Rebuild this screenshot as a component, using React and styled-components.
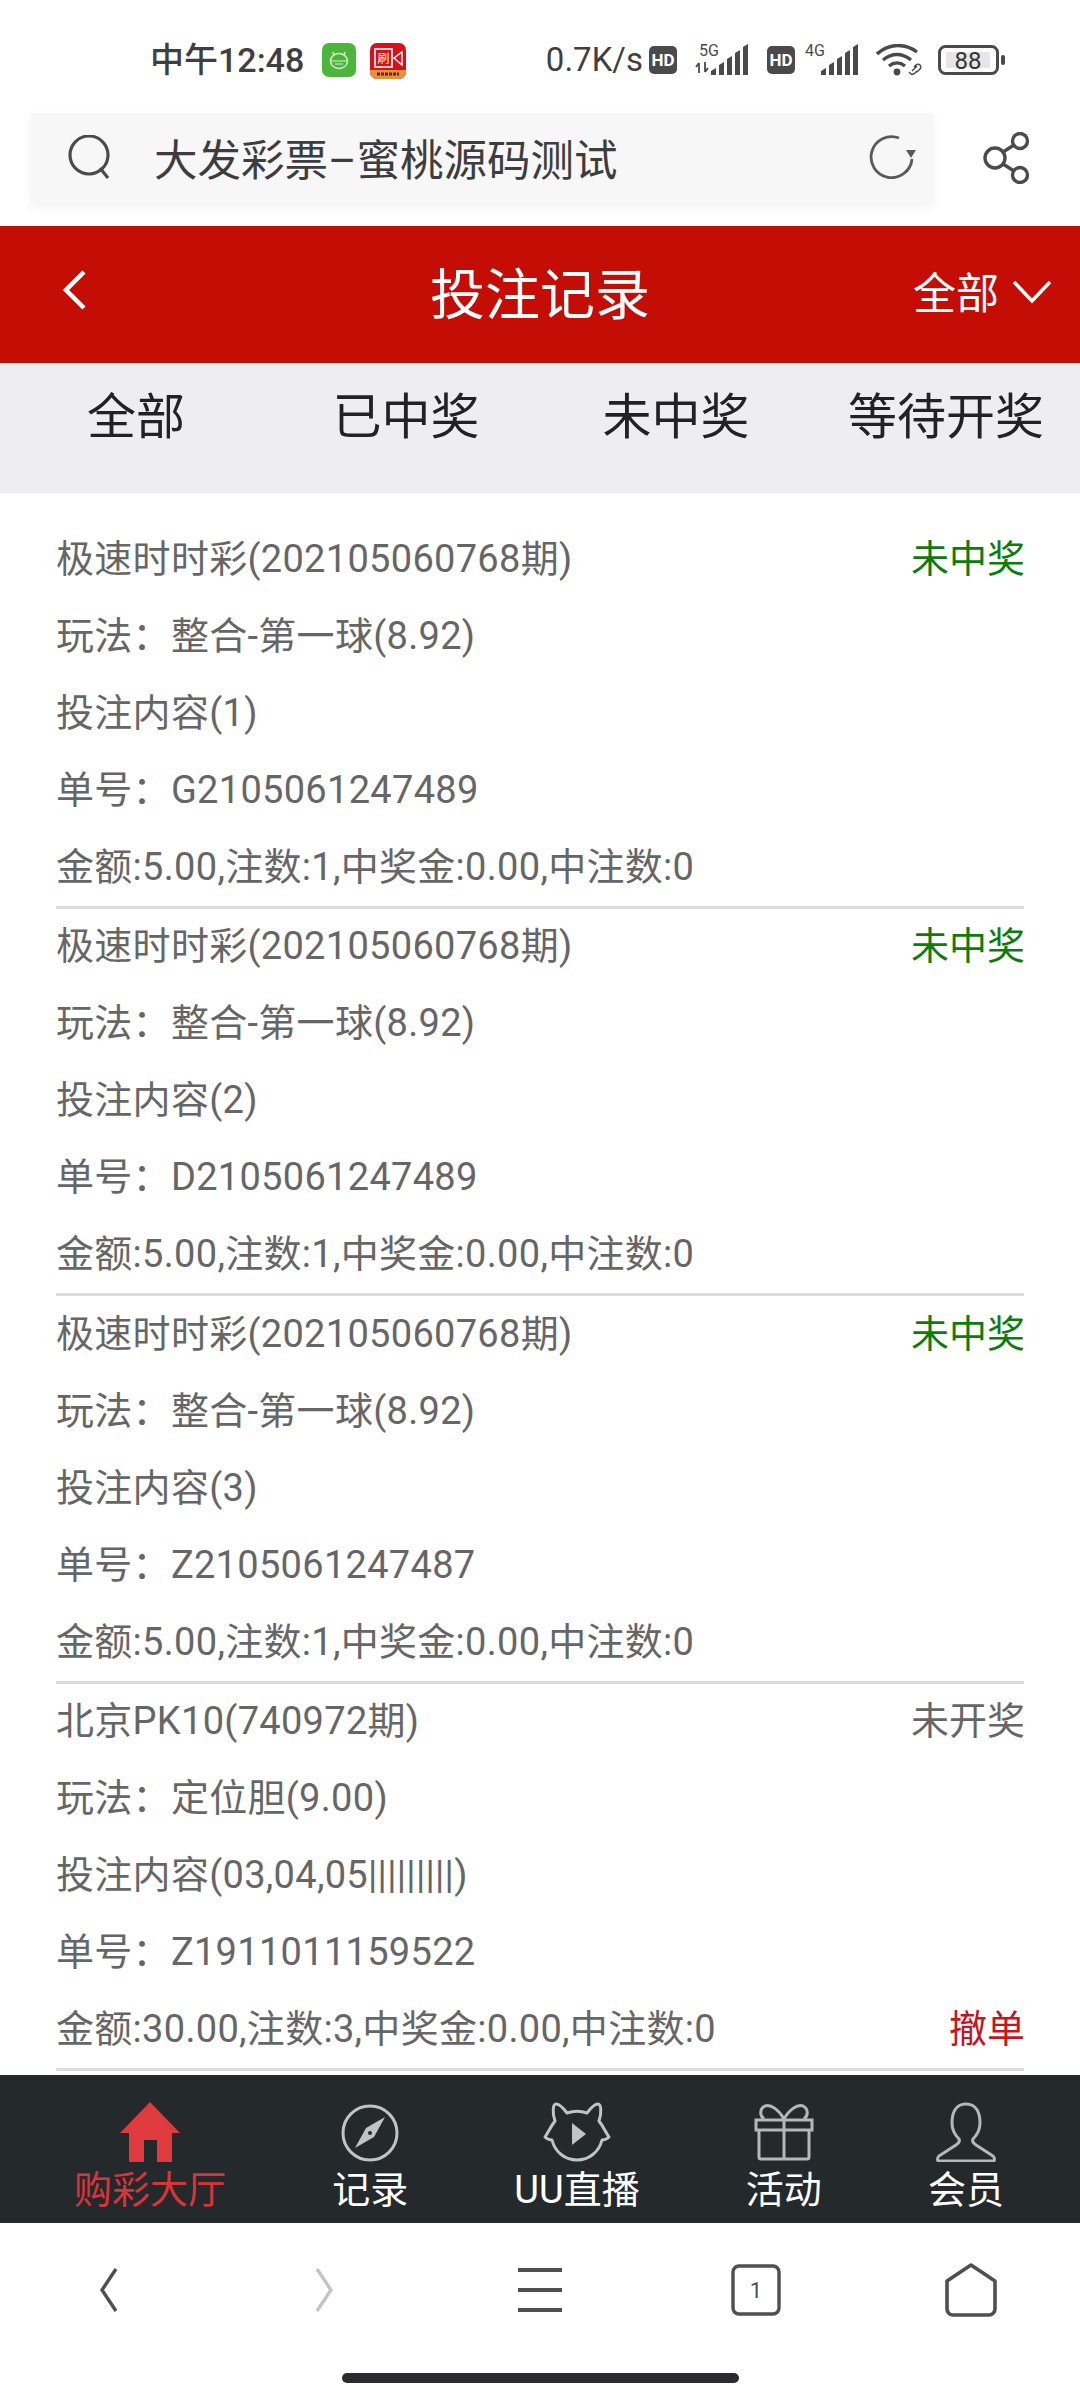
import React from 'react';
import styled, { createGlobalStyle } from 'styled-components';

const GlobalStyle = createGlobalStyle`
  html, body {
    margin: 0;
    padding: 0;
    background: #fff;
  }
  body {
    font-family: Roboto, "Noto Sans CJK SC", sans-serif;
  }
  * { box-sizing: border-box; }
`;

const Page = styled.div`
  width: 1080px;
  height: 2400px;
  display: flex;
  flex-direction: column;
  overflow: hidden;
  background: #fff;
`;

/* system status bar */
const StatusBar = styled.div`
  height: 113px;
  padding: 43px 74px 0 150px;
  display: flex;
  align-items: flex-start;
  color: #3f3f41;
`;
const Clock = styled.span`
  font-size: 34px;
  line-height: 34px;
  font-weight: 500;
  width: 172px;
`;
const AppBadges = styled.div`
  display: flex;
  gap: 14px;
`;
const Speed = styled.span`
  margin-left: auto;
  font-size: 33px;
  line-height: 34px;
  margin-right: 6px;
`;
const StatusIcons = styled.div`
  display: flex;
  align-items: center;
  height: 34px;
`;

/* browser address bar */
const AddressRow = styled.div`
  height: 113px;
  padding: 0 49px 23px 31px;
  display: flex;
  align-items: stretch;
  justify-content: space-between;
`;
const SearchBox = styled.div`
  width: 902px;
  display: flex;
  align-items: center;
  padding: 0 16px 2px 36px;
  background: #f7f7f7;
  box-shadow: 0 4px 10px rgba(0, 0, 0, 0.05);
`;
const SearchText = styled.span`
  margin-left: 41px;
  font-size: 43.5px;
  color: #3d3d3d;
  flex: 1;
`;
const ShareButton = styled.div`
  display: flex;
  align-items: center;
`;

/* red page header */
const Header = styled.div`
  height: 137px;
  background: #c30d05;
  color: #fff;
  display: grid;
  grid-template-columns: 1fr auto 1fr;
  align-items: center;
  padding: 0 28px 9px;
`;
const BackLink = styled.div`
  display: flex;
  margin-left: 34px;
`;
const HeaderTitle = styled.div`
  font-size: 55px;
`;
const HeaderFilter = styled.div`
  display: flex;
  align-items: center;
  justify-content: flex-end;
  gap: 13px;
  font-size: 43px;

  svg {
    margin-top: 4px;
  }
`;

/* tabs */
const Tabs = styled.div`
  height: 130px;
  background: #eeeef0;
  display: grid;
  grid-template-columns: repeat(4, 270px);
  padding: 0 0 0 1px;
`;
const Tab = styled.div`
  font-size: 49px;
  color: #222;
  text-align: center;
  line-height: 109px;
  white-space: nowrap;
`;

/* record list */
const List = styled.div`
  flex: 1;
  padding: 28px 56px 0;
  overflow: hidden;
`;
const Record = styled.div`
  height: 387.5px;
  border-bottom: 3px solid #dcdcdc;
`;
const Line = styled.div`
  height: 77.1px;
  padding-bottom: 9px;
  display: flex;
  align-items: center;
  justify-content: space-between;
  font-size: 38px;
  letter-spacing: 0.3px;
  color: #666;
  white-space: nowrap;
`;
const Status = styled.span`
  color: ${p => p.$color};
  letter-spacing: 0;
  margin-right: -1px;
`;

/* app tab bar */
const TabBar = styled.div`
  height: 148px;
  background: #24292c;
  display: flex;
  justify-content: space-between;
  padding: 0 76px 0 74px;
`;
const TabItem = styled.div`
  display: flex;
  flex-direction: column;
  align-items: center;
  color: ${p => (p.$active ? '#d8343a' : '#fff')};
  font-size: 38px;
  line-height: 44px;
  padding-top: 3px;
  white-space: nowrap;
`;
const TabIcon = styled.div`
  height: 90px;
  display: flex;
  align-items: flex-end;
  padding-bottom: 6px;
`;

/* browser bottom toolbar */
const BrowserBar = styled.div`
  height: 150px;
  display: grid;
  grid-template-columns: repeat(5, 1fr);
  grid-template-rows: 53px;
  padding: 40px 1px 0;
  align-items: center;
  justify-items: center;
`;
const HomeIndicator = styled.div`
  width: 397px;
  height: 10px;
  border-radius: 5px;
  background: #2b2b2d;
  margin: 0 auto 17px;
`;

const records = [
  { title: '极速时时彩(202105060768期)', status: '未中奖', color: '#0b7d0b', play: '玩法：整合-第一球(8.92)', content: '投注内容(1)', no: '单号：G2105061247489', amount: '金额:5.00,注数:1,中奖金:0.00,中注数:0' },
  { title: '极速时时彩(202105060768期)', status: '未中奖', color: '#0b7d0b', play: '玩法：整合-第一球(8.92)', content: '投注内容(2)', no: '单号：D2105061247489', amount: '金额:5.00,注数:1,中奖金:0.00,中注数:0' },
  { title: '极速时时彩(202105060768期)', status: '未中奖', color: '#0b7d0b', play: '玩法：整合-第一球(8.92)', content: '投注内容(3)', no: '单号：Z2105061247487', amount: '金额:5.00,注数:1,中奖金:0.00,中注数:0' },
  { title: '北京PK10(740972期)', status: '未开奖', color: '#666', play: '玩法：定位胆(9.00)', content: '投注内容(03,04,05|||||||||)', no: '单号：Z1911011159522', amount: '金额:30.00,注数:3,中奖金:0.00,中注数:0', cancel: true },
];

const HdBadge = ({ ml }) => (
  <svg width="28" height="28" viewBox="0 0 28 28" style={{ marginLeft: ml }}>
    <rect width="28" height="28" rx="5" fill="#4a4a4c" />
    <text x="14" y="20" textAnchor="middle" fontFamily="Roboto, sans-serif" fontWeight="700" fontSize="17" fill="#fff">HD</text>
  </svg>
);

const Signal = ({ label, arrows, ml }) => (
  <svg width="56" height="38" viewBox="0 -6 56 38" style={{ marginLeft: ml, marginTop: -6 }}>
    <text x={arrows ? 4 : 0} y="12" fontFamily="Roboto, sans-serif" fontSize="16" fill="#4a4a4c">{label}</text>
    {arrows && <path d="M4 29V19M4 19L1 23M10 18V28M10 28L13 24" stroke="#4a4a4c" strokeWidth="1.8" fill="none" />}
    <path d="M16 31v-4l5-3v7zM24 31V21l5-3v13zM32 31V15l5-3v19zM40 31V9l5-3v25zM48 31V3l5-3v31z" fill="#4a4a4c" />
  </svg>
);

const Wifi = () => (
  <svg width="48" height="32" viewBox="0 0 48 32" style={{ marginLeft: 15 }}>
    <path d="M1 10C13-1 29-1 41 8M7 16c9-7 19-7 28 0M13 22c5-4 11-4 16 0" stroke="#4a4a4c" strokeWidth="3.4" fill="none" />
    <circle cx="21" cy="28" r="3.4" fill="#4a4a4c" />
    <path d="M33 28l2 2c2 1 3 0 4-1l2-2M38 23l2-2c1-1 3-1 4 0s1 3 0 4l-3 3M36 27l5-5" stroke="#4a4a4c" strokeWidth="1.5" fill="none" />
  </svg>
);

const Battery = () => (
  <svg width="68" height="30" viewBox="0 0 68 30" style={{ marginLeft: 14 }}>
    <rect x="1.5" y="1.5" width="58" height="27" rx="6" fill="none" stroke="#4a4a4c" strokeWidth="3" />
    <rect x="8" y="7" width="44" height="16" fill="#e6e6e6" />
    <rect x="63" y="10" width="4" height="10" rx="2" fill="#4a4a4c" />
    <text x="30" y="23.5" textAnchor="middle" fontFamily="Roboto, sans-serif" fontSize="24" fill="#333">88</text>
  </svg>
);

const GreenBadge = () => (
  <svg width="34" height="34" viewBox="0 0 34 34">
    <rect width="34" height="34" rx="7" fill="#4cb53c" />
    <path d="M11 9l1 4M23 9l-1 4" stroke="#d8f0d2" strokeWidth="1.5" />
    <ellipse cx="17" cy="18" rx="8.5" ry="7.5" fill="none" stroke="#d8f0d2" strokeWidth="1.5" />
    <path d="M9 18h16M13 21h8" stroke="#d8f0d2" strokeWidth="1.2" />
  </svg>
);

const RedBadge = () => (
  <svg width="36" height="36" viewBox="0 0 36 36">
    <rect width="36" height="36" rx="7" fill="#d8101a" />
    <path d="M0 27h36v2a7 7 0 0 1-7 7H7a7 7 0 0 1-7-7z" fill="#e8913a" />
    <rect x="5" y="6" width="17" height="18" fill="none" stroke="#fff" strokeWidth="1.6" />
    <path d="M24 15l8-6v13z" fill="none" stroke="#fff" strokeWidth="1.4" />
    <text x="13.5" y="20" textAnchor="middle" fontFamily="Noto Sans CJK SC, sans-serif" fontSize="12" fill="#fff">刷</text>
    <path d="M7 31h22" stroke="#5a2a10" strokeWidth="3" strokeDasharray="3 1" />
  </svg>
);

const SearchIcon = () => (
  <svg width="46" height="44" viewBox="0 0 46 44">
    <circle cx="22" cy="20" r="19" fill="none" stroke="#4b4b4b" strokeWidth="3.2" />
    <path d="M33 33l8 10" stroke="#4b4b4b" strokeWidth="3.2" />
  </svg>
);

const RefreshIcon = () => (
  <svg width="48" height="44" viewBox="0 0 48 44">
    <path d="M43 24A20.5 20.5 0 1 1 30 3" fill="none" stroke="#5a5a5a" strokeWidth="2.8" />
    <path d="M37 15h10l-5 8z" fill="#5a5a5a" />
  </svg>
);

const ShareIcon = () => (
  <svg width="48" height="52" viewBox="0 0 48 52">
    <circle cx="12" cy="26" r="10" fill="none" stroke="#4b4b4b" strokeWidth="3.4" />
    <circle cx="37" cy="9" r="7.5" fill="none" stroke="#4b4b4b" strokeWidth="3.4" />
    <circle cx="37" cy="43" r="7.5" fill="none" stroke="#4b4b4b" strokeWidth="3.4" />
    <path d="M20 20l11-7M20 32l11 7" stroke="#4b4b4b" strokeWidth="3.4" />
  </svg>
);

const HomeIcon = () => (
  <svg width="60" height="60" viewBox="0 0 60 60">
    <path d="M30 0L60 31H52V60H37V38H24V60H9V31H0z" fill="#df3b3f" />
  </svg>
);

const CompassIcon = () => (
  <svg width="58" height="58" viewBox="0 0 58 58">
    <circle cx="29" cy="29" r="27" fill="none" stroke="#c0c4c6" strokeWidth="3" />
    <path d="M44 13L33 33 14 44l11-20z" fill="#c0c4c6" />
    <circle cx="29" cy="29" r="2" fill="#24292c" />
  </svg>
);

const CatIcon = () => (
  <svg width="70" height="60" viewBox="0 0 70 60">
    <path d="M13 19C10 10 11 2 14 2c4 0 8 5 11 9 6-2 14-2 20 0 3-4 7-9 11-9 3 0 4 8 1 17 4 5 6 10 10 16-3 3-5 3-7 3-3 12-13 20-25 20S13 50 10 38c-2 0-4 0-7-3 4-6 6-11 10-16z" fill="none" stroke="#c0c4c6" strokeWidth="3" strokeLinejoin="round" />
    <path d="M30 21l14 11-14 11z" fill="#c0c4c6" />
  </svg>
);

const GiftIcon = () => (
  <svg width="60" height="58" viewBox="0 0 60 58">
    <path d="M30 15C25 6 17 0 11 2 5 5 6 12 10 15M30 15C35 6 43 0 49 2c6 3 5 10 1 13" fill="none" stroke="#b4b8ba" strokeWidth="3" />
    <path d="M2 16h56v10H2zM5 26h50M5 26v27a2 2 0 0 0 2 2h46a2 2 0 0 0 2-2V26M30 15v40" fill="none" stroke="#b4b8ba" strokeWidth="3" />
  </svg>
);

const PersonIcon = () => (
  <svg width="62" height="60" viewBox="0 0 62 60">
    <path d="M31 2C20 2 17 12 17 21c0 7 3 12 7 16 1 2 0 4-3 6L4 54c-2 2-2 5 0 5h54c2 0 2-3 0-5L41 43c-3-2-4-4-3-6 4-4 7-9 7-16 0-9-3-19-14-19z" fill="none" stroke="#b4b8ba" strokeWidth="3" strokeLinejoin="round" />
  </svg>
);

const NavBack = ({ color, flip }) => (
  <svg width="20" height="44" viewBox="0 0 20 44" style={flip ? { transform: 'scaleX(-1)' } : undefined}>
    <path d="M17 1L3 22l14 21" fill="none" stroke={color} strokeWidth="3.4" />
  </svg>
);

const MenuIcon = () => (
  <svg width="44" height="44" viewBox="0 0 44 44">
    <path d="M0 2h44M0 22h44M0 42h44" stroke="#4f4f4f" strokeWidth="4" />
  </svg>
);

const TabCount = () => (
  <svg width="50" height="52" viewBox="0 0 50 52">
    <rect x="2" y="2" width="46" height="48" rx="6" fill="none" stroke="#4f4f4f" strokeWidth="3.4" />
    <text x="25" y="34" textAnchor="middle" fontFamily="Roboto, sans-serif" fontSize="22" fill="#4f4f4f">1</text>
  </svg>
);

const BrowserHome = () => (
  <svg width="52" height="54" viewBox="0 0 52 54">
    <path d="M26 2L50 18V46a6 6 0 0 1-6 6H8a6 6 0 0 1-6-6V18z" fill="none" stroke="#4f4f4f" strokeWidth="3.6" strokeLinejoin="round" />
  </svg>
);

const App = () => (
  <Page>
    <GlobalStyle />
    <StatusBar>
      <Clock>中午12:48</Clock>
      <AppBadges>
        <GreenBadge />
        <RedBadge />
      </AppBadges>
      <Speed>0.7K/s</Speed>
      <StatusIcons>
        <HdBadge ml={0} />
        <Signal label="5G" arrows ml={18} />
        <HdBadge ml={16} />
        <Signal label="4G" ml={10} />
        <Wifi />
        <Battery />
      </StatusIcons>
    </StatusBar>

    <AddressRow>
      <SearchBox>
        <SearchIcon />
        <SearchText>大发彩票–蜜桃源码测试</SearchText>
        <RefreshIcon />
      </SearchBox>
      <ShareButton>
        <ShareIcon />
      </ShareButton>
    </AddressRow>

    <Header>
      <BackLink>
        <svg width="24" height="40" viewBox="0 0 24 40">
          <path d="M22 2L4 20l18 18" fill="none" stroke="#fff" strokeWidth="4.5" />
        </svg>
      </BackLink>
      <HeaderTitle>投注记录</HeaderTitle>
      <HeaderFilter>
        全部
        <svg width="40" height="24" viewBox="0 0 40 24">
          <path d="M2 2l18 19L38 2" fill="none" stroke="#fff" strokeWidth="3.5" />
        </svg>
      </HeaderFilter>
    </Header>

    <Tabs>
      {['全部', '已中奖', '未中奖', '等待开奖'].map(t => (
        <Tab key={t}>{t}</Tab>
      ))}
    </Tabs>

    <List>
      {records.map((r, i) => (
        <Record key={i}>
          <Line>
            {r.title}
            <Status $color={r.color}>{r.status}</Status>
          </Line>
          <Line>{r.play}</Line>
          <Line>{r.content}</Line>
          <Line>{r.no}</Line>
          <Line>
            {r.amount}
            {r.cancel && <Status $color="#c8141c">撤单</Status>}
          </Line>
        </Record>
      ))}
    </List>

    <TabBar>
      <TabItem $active>
        <TabIcon><HomeIcon /></TabIcon>
        购彩大厅
      </TabItem>
      <TabItem>
        <TabIcon><CompassIcon /></TabIcon>
        记录
      </TabItem>
      <TabItem>
        <TabIcon><CatIcon /></TabIcon>
        UU直播
      </TabItem>
      <TabItem>
        <TabIcon><GiftIcon /></TabIcon>
        活动
      </TabItem>
      <TabItem>
        <TabIcon><PersonIcon /></TabIcon>
        会员
      </TabItem>
    </TabBar>

    <BrowserBar>
      <NavBack color="#4f4f4f" />
      <NavBack color="#c4c4c4" flip />
      <MenuIcon />
      <TabCount />
      <BrowserHome />
    </BrowserBar>
    <HomeIndicator />
  </Page>
);

export default App;
